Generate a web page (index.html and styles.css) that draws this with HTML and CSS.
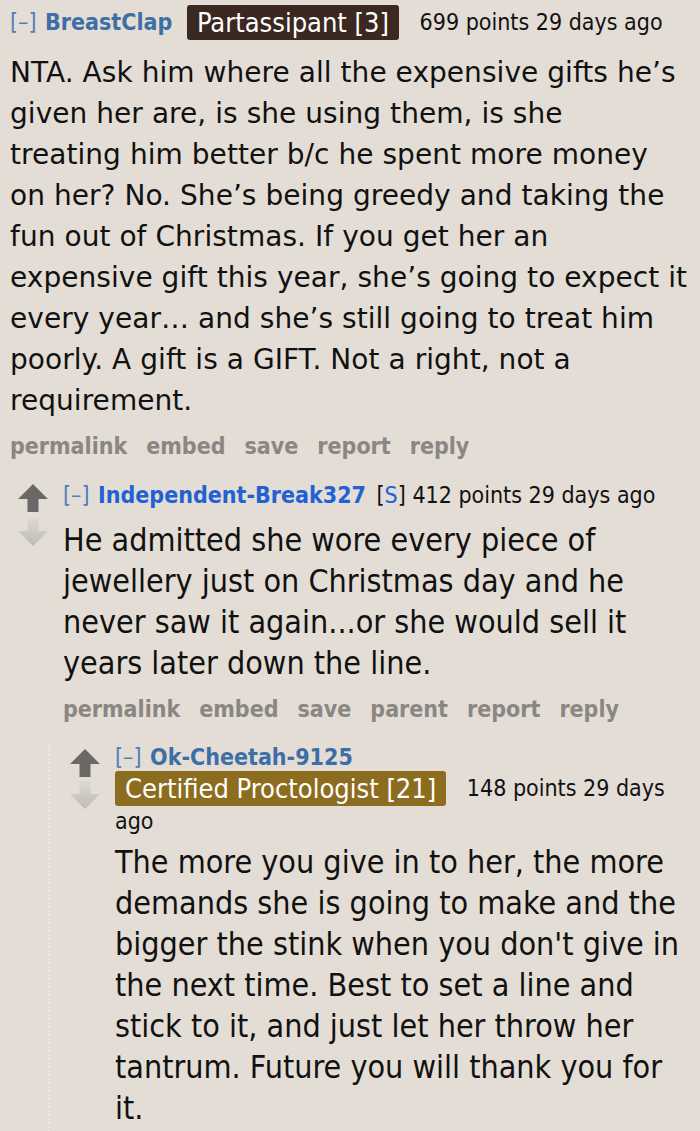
FILE: index.html
```html
<!DOCTYPE html>
<html>
<head>
<meta charset="utf-8">
<link rel="stylesheet" href="styles.css">
</head>
<body>
<svg width="0" height="0" class="defs">
  <defs>
    <linearGradient id="downfade" x1="0" y1="0" x2="0" y2="1">
      <stop offset="0" stop-color="#dcd8d4"/>
      <stop offset="1" stop-color="#bebab6"/>
    </linearGradient>
  </defs>
</svg>
<div class="thread">
  <div class="comment top">
    <div class="tagline">
      <span class="expand">[–]</span>
      <span class="author">BreastClap</span>
      <span class="flair flair-dark">Partassipant [3]</span>
      <span class="score">699 points 29 days ago</span>
    </div>
    <div class="body body-first">NTA. Ask him where all the expensive gifts he’s<br>given her are, is she using them, is she<br>treating him better b/c he spent more money<br>on her? No. She’s being greedy and taking the<br>fun out of Christmas. If you get her an<br>expensive gift this year, she’s going to expect it<br>every year… and she’s still going to treat him<br>poorly. A gift is a GIFT. Not a right, not a<br>requirement.</div>
    <ul class="buttons">
      <li>permalink</li><li>embed</li><li>save</li><li>report</li><li>reply</li>
    </ul>

    <div class="child-comment level1">
      <div class="votes">
        <svg class="arrow up" viewBox="0 0 30 28" width="30" height="28"><path d="M15 0 L30 15 L20.5 15 L20.5 28 L9.5 28 L9.5 15 L0 15 Z"/></svg>
        <svg class="arrow down" viewBox="0 0 30 28" width="30" height="28"><path d="M15 28 L30 13 L20.5 13 L20.5 0 L9.5 0 L9.5 13 L0 13 Z"/></svg>
      </div>
      <div class="entry">
        <div class="tagline">
          <span class="expand">[–]</span>
          <span class="author submitter">Independent-Break327</span>
          <span class="bracket">[<span class="s">S</span>]</span>
          <span class="score">412 points 29 days ago</span>
        </div>
        <div class="body body-v">He admitted she wore every piece of jewellery just on Christmas day and he never saw it again...or she would sell it years later down the line.</div>
        <ul class="buttons">
          <li>permalink</li><li>embed</li><li>save</li><li>parent</li><li>report</li><li>reply</li>
        </ul>
      </div>
    </div>

    <div class="child">
      <div class="child-comment level2">
        <div class="votes">
          <svg class="arrow up" viewBox="0 0 30 28" width="30" height="28"><path d="M15 0 L30 15 L20.5 15 L20.5 28 L9.5 28 L9.5 15 L0 15 Z"/></svg>
          <svg class="arrow down" viewBox="0 0 30 28" width="30" height="28"><path d="M15 28 L30 13 L20.5 13 L20.5 0 L9.5 0 L9.5 13 L0 13 Z"/></svg>
        </div>
        <div class="entry entry-narrow">
          <div class="tagline-wrap">
            <div class="tagline-first">
              <span class="expand">[–]</span>
              <span class="author">Ok-Cheetah-9125</span>
            </div>
            <div class="tagline-rest">
              <span class="flair flair-gold">Certified Proctologist [21]</span>
              <span class="score">148 points 29 days</span>
            </div>
            <div class="tagline-ago">ago</div>
          </div>
          <div class="body body-v body-last">The more you give in to her, the more demands she is going to make and the bigger the stink when you don't give in the next time. Best to set a line and stick to it, and just let her throw her tantrum. Future you will thank you for it.</div>
        </div>
      </div>
    </div>
  </div>
</div>
</body>
</html>
```

FILE: styles.css
```css
html, body {
  margin: 0;
  padding: 0;
  background: #e3ddd5;
}
body {
  width: 700px;
  height: 1131px;
  overflow: hidden;
  font-family: "DejaVu Sans Condensed", "DejaVu Sans", sans-serif;
  color: #111;
}
.defs {
  position: absolute;
}
.thread {
  padding: 0 0 0 10px;
}
.tagline {
  font-size: 23px;
  line-height: 35px;
  height: 35px;
  white-space: nowrap;
  padding-top: 5px;
}
.expand {
  color: #4f80b8;
}
.author {
  color: #3d6ea6;
  font-weight: bold;
  margin-left: 2px;
}
.author.submitter {
  color: #2261d4;
}
.bracket {
  margin-left: 4px;
}
.bracket .s {
  color: #2261d4;
}
.flair {
  display: inline-block;
  color: #fff;
  font-size: 27px;
  line-height: 35px;
  padding: 0 10px;
  border-radius: 3px;
  margin: 0 14px 0 8px;
  vertical-align: top;
}
.flair-dark {
  background: #3b2821;
}
.flair-gold {
  background: #8c6c1e;
  margin: 0 14px 0 0;
}
.score {
  color: #111;
}
.body {
  line-height: 41px;
  color: #111;
}
.body-first {
  font-family: "DejaVu Sans", sans-serif;
  font-size: 28px;
  letter-spacing: 0.05px;
  white-space: nowrap;
  margin-top: 12px;
}
.body-v {
  font-size: 32px;
  margin-top: 7px;
}
.buttons {
  list-style: none;
  margin: 10px 0 0 0;
  padding: 0;
  display: flex;
  gap: 19px;
  font-weight: bold;
  font-size: 23px;
  color: #8a8684;
  line-height: 30px;
}
.child-comment {
  display: flex;
}
.level1 {
  margin-top: 12px;
  margin-left: 8px;
}
.votes {
  display: flex;
  flex-direction: column;
  gap: 6px;
  width: 45px;
  flex: none;
  padding-top: 11px;
}
.arrow.up {
  fill: #6a6867;
}
.arrow.down {
  fill: url(#downfade);
}
.entry {
  flex: 1;
  min-width: 0;
}
.entry-narrow {
  padding-right: 12px;
}
.child {
  margin-left: 38px;
  border-left: 2px dotted #ebe9ef;
  margin-top: 19px;
}
.level2 {
  margin-left: 20px;
}
.level2 .votes {
  padding-top: 6px;
  gap: 4px;
}
.tagline-wrap {
  font-size: 23px;
}
.tagline-first {
  line-height: 28px;
  padding-top: 0;
}
.tagline-rest {
  line-height: 35px;
  height: 35px;
  white-space: nowrap;
}
.tagline-ago {
  line-height: 30px;
}
.level2 .body-last {
  margin-top: 6px;
  padding-bottom: 30px;
}
```
